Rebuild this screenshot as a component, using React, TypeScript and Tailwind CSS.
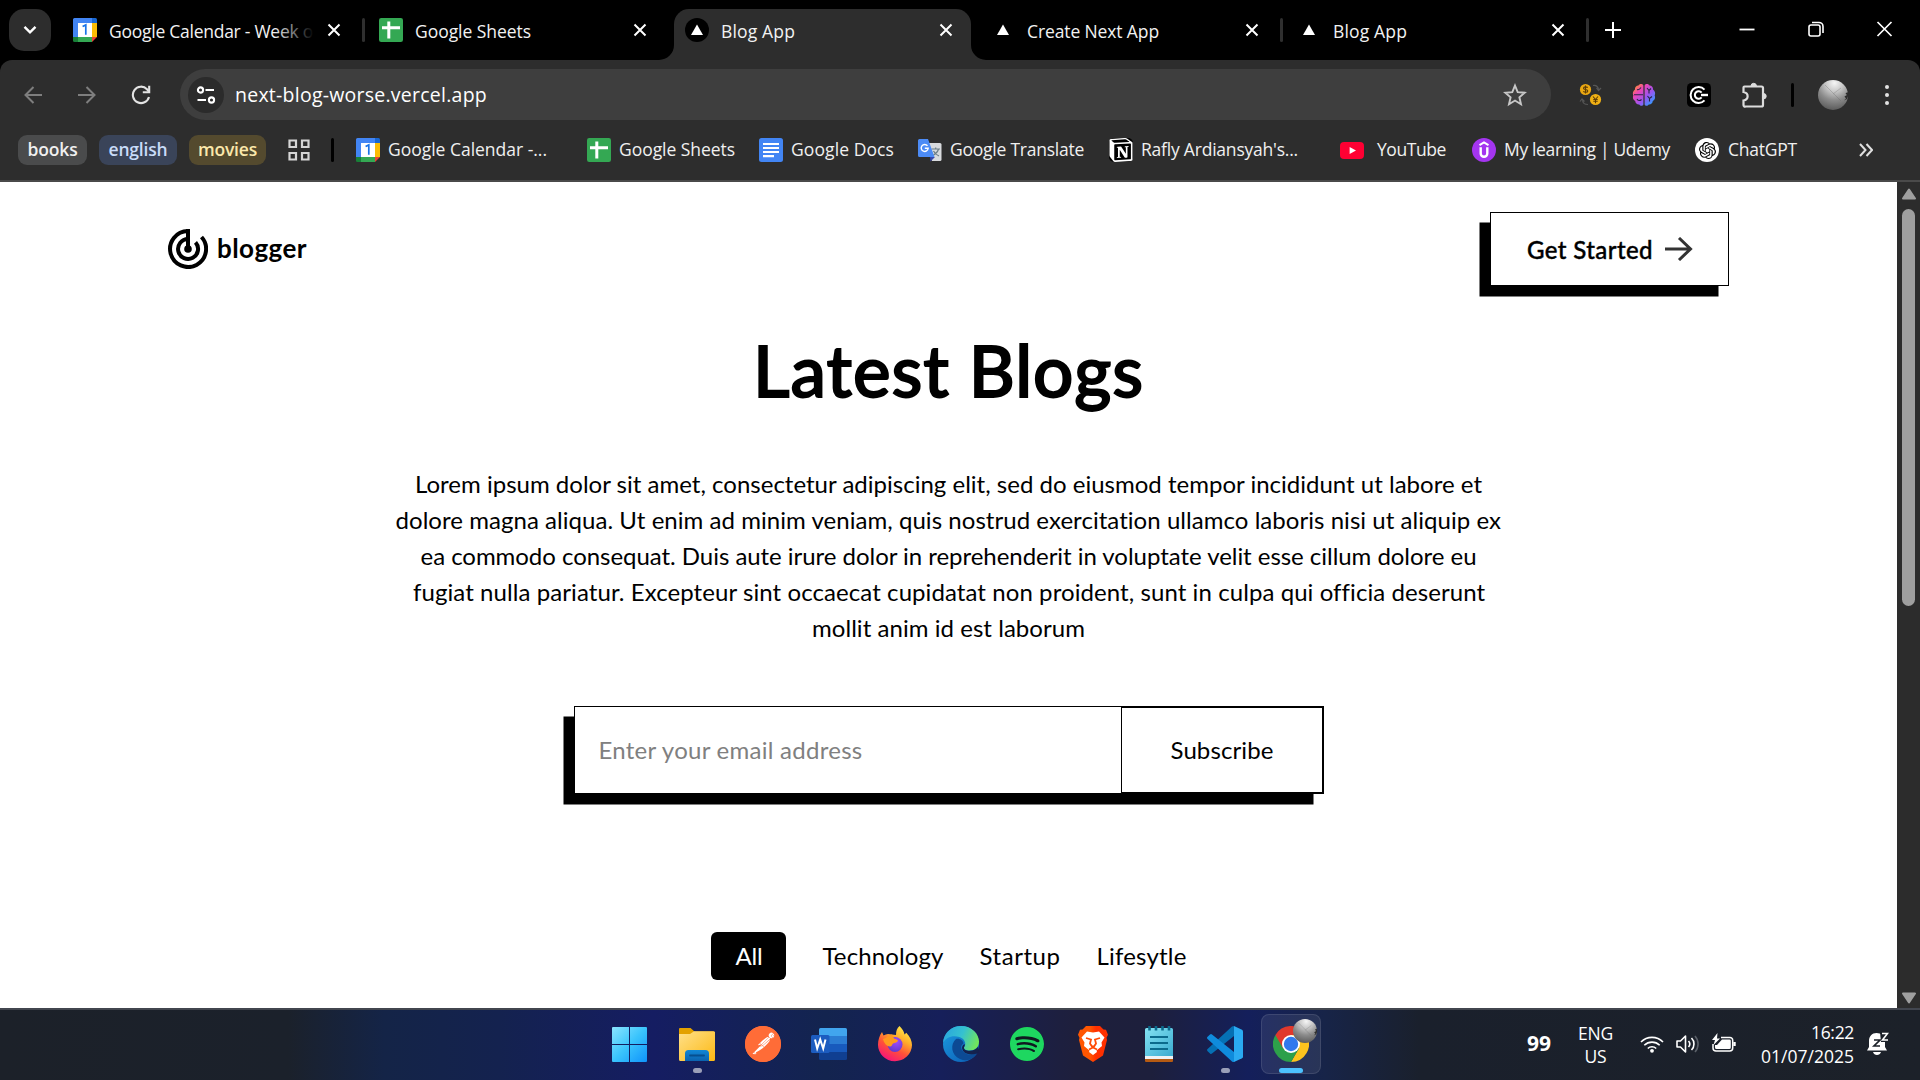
import { useLayoutEffect, useRef, useState, type ReactNode } from "react";
import { SiNotion, SiOpenai, SiSpotify, SiPostman } from "react-icons/si";

/* Single line of text tracked to an exact width. */
function Fit({ w, className = "", children }: { w: number; className?: string; children: string }) {
  const ref = useRef<HTMLSpanElement>(null);
  const [spacing, setSpacing] = useState(0);
  useLayoutEffect(() => {
    const el = ref.current;
    if (!el) return;
    el.style.letterSpacing = "0px";
    const natural = el.getBoundingClientRect().width;
    const next = (w - natural) / children.length;
    el.style.letterSpacing = `${next}px`;
    setSpacing(next);
  }, [w, children]);
  return (
    <span className={`block shrink-0 whitespace-nowrap ${className}`} style={{ width: w }}>
      <span ref={ref} style={{ letterSpacing: spacing }}>
        {children}
      </span>
    </span>
  );
}

const CalendarIcon = () => (
  <svg viewBox="0 0 24 24" className="size-6 shrink-0">
    <path d="M1.500 0H19v5H5v14H0V1.500A1.500 1.500 0 0 1 1.500 0z" fill="#4285f4" />
    <path d="M19 0h3.500A1.500 1.500 0 0 1 24 1.500V5h-5z" fill="#1967d2" />
    <path d="M19 5h5v14h-5z" fill="#fbbc04" />
    <path d="M5 19h14v5H5z" fill="#34a853" />
    <path d="M0 19h5v5H1.500A1.500 1.500 0 0 1 0 22.500z" fill="#188038" />
    <path d="M19 19h5l-5 5z" fill="#ea4335" />
    <path d="M5 5h14v14H5z" fill="#fff" />
    <path d="M9.600 8.600 12.800 7v9.800" fill="none" stroke="#1a73e8" strokeWidth="1.700" />
  </svg>
);

const SheetsIcon = () => (
  <svg viewBox="0 0 24 24" className="size-6 shrink-0">
    <rect width="24" height="24" rx="2.200" fill="#34a853" />
    <path d="M9.800 3.500V20.500M3 9.800H21" stroke="#fff" strokeWidth="3" />
  </svg>
);

const DocsIcon = () => (
  <svg viewBox="0 0 24 24" className="size-6 shrink-0">
    <rect width="24" height="24" rx="2.500" fill="#4285f4" />
    <path d="M4 6h16M4 10h16M4 14h16M4 18.200h11" stroke="#fff" strokeWidth="2.200" />
  </svg>
);

const TranslateIcon = () => (
  <svg viewBox="0 0 24 24" className="size-6 shrink-0">
    <path d="M9 5h13a1.500 1.500 0 0 1 1.500 1.500v15A1.500 1.500 0 0 1 22 23H14z" fill="#d8dadd" />
    <path d="M13.500 11h8.500M17.700 9.500V11M20.500 11c-.8 3-3 5-5.500 6.500M15.500 13c1 2 3 4 5.500 5" fill="none" stroke="#6b7c86" strokeWidth="1.200" />
    <path d="m12 19 5 0-4.500 4.500z" fill="#3949ab" />
    <path d="M1.500 1H10l6.500 18H1.500A1.500 1.500 0 0 1 0 17.500v-15A1.500 1.500 0 0 1 1.500 1z" fill="#4c8bf5" />
    <path d="M9.500 7.800A3.500 3.500 0 1 0 10.200 10.300H6.800" fill="none" stroke="#fff" strokeWidth="1.400" />
  </svg>
);

const YouTubeIcon = () => (
  <svg viewBox="0 0 24 24" className="size-6 shrink-0">
    <rect y="4" width="24" height="17" rx="4" fill="#ff0033" />
    <path d="m9.600 9 6.400 3.500-6.400 3.500z" fill="#fff" />
  </svg>
);

const UdemyIcon = () => (
  <svg viewBox="0 0 24 24" className="size-6 shrink-0">
    <circle cx="12" cy="12" r="12" fill="#a435f0" />
    <path d="m7.500 7.200 4.500-2.700 4.500 2.700" fill="none" stroke="#fff" strokeWidth="2" />
    <path d="M8.700 9.300v6.200a3.300 3.300 0 0 0 6.600 0V9.300" fill="none" stroke="#fff" strokeWidth="2.400" />
  </svg>
);

const NotionIcon = () => (
  <span className="flex size-6 shrink-0 items-center justify-center rounded-[5px] bg-black text-white">
    <SiNotion className="size-6" />
  </span>
);

const ChatGptIcon = () => (
  <span className="flex size-6 shrink-0 items-center justify-center rounded-full bg-white text-black">
    <SiOpenai className="size-[17px]" />
  </span>
);

const VercelIcon = () => (
  <svg viewBox="0 0 24 24" className="size-6 shrink-0">
    <circle cx="12" cy="12" r="12" fill="#000" />
    <path d="m12 6.500 6 10.500H6z" fill="#fff" />
  </svg>
);

const CloseX = () => (
  <svg viewBox="0 0 14 14" className="size-[14px] shrink-0" stroke="#fff" strokeWidth="2" fill="none">
    <path d="m1.500 1.500 11 11M12.500 1.500l-11 11" />
  </svg>
);

type TabProps = { icon: ReactNode; title: string; w: number; active?: boolean; fade?: boolean; divider?: boolean };

function Tab({ icon, title, w, active, fade, divider }: TabProps) {
  return (
    <div className="flex h-[60px] w-[306px] shrink-0">
      <div
        className={
          active
            ? "relative mt-[9px] flex h-[51px] w-[297px] items-center rounded-t-[15px] bg-[#2d2d2d] pb-[9px] pl-[11px]"
            : "relative mt-[9px] flex h-[51px] w-[297px] items-center pb-[9px] pl-[11px]"
        }
      >
        {active && (
          <>
            <svg viewBox="0 0 15 15" className="absolute bottom-0 -left-[15px] size-[15px]">
              <path d="M15 0v15H0A15 15 0 0 0 15 0z" fill="#2d2d2d" />
            </svg>
            <svg viewBox="0 0 15 15" className="absolute -right-[15px] bottom-0 size-[15px]">
              <path d="M0 0v15h15A15 15 0 0 1 0 0z" fill="#2d2d2d" />
            </svg>
          </>
        )}
        {icon}
        <div className="relative ml-3 flex w-[205px] pt-[2px] text-[17.500px] leading-6 text-[#f2f2f2]">
          <Fit w={w}>{title}</Fit>
          {fade && <div className="absolute inset-y-0 right-0 w-10 bg-linear-to-r from-transparent to-black" />}
        </div>
        <div className="ml-[13px]">
          <CloseX />
        </div>
      </div>
      {divider && <div className="mt-[18px] ml-[3px] h-6 w-[3px] rounded-full bg-[#2f2f2f]" />}
    </div>
  );
}

function TabStrip() {
  return (
    <div className="flex h-[60px] bg-black">
      <div className="mt-[9px] ml-[9px] flex h-[42px] w-[42px] shrink-0 items-center justify-center rounded-[15px] bg-[#2d2d2d]">
        <svg viewBox="0 0 14 10" className="h-[10px] w-[14px]" fill="none" stroke="#fff" strokeWidth="2.400">
          <path d="m1.500 1.800 5.500 5.500 5.500-5.500" />
        </svg>
      </div>
      <div className="ml-[11px] flex shrink-0">
        <Tab icon={<CalendarIcon />} title="Google Calendar - Week o" w={204} fade divider />
        <Tab icon={<SheetsIcon />} title="Google Sheets" w={116} />
        <Tab icon={<VercelIcon />} title="Blog App" w={74} active />
        <Tab icon={<VercelIcon />} title="Create Next App" w={132} divider />
        <Tab icon={<VercelIcon />} title="Blog App" w={74} divider />
      </div>
      <svg viewBox="0 0 16 16" className="mt-[22px] ml-[13px] size-4" stroke="#fff" strokeWidth="2">
        <path d="M8 0v16M0 8h16" />
      </svg>
      <div className="mt-[20px] ml-[117px] flex gap-[51px]">
        <svg viewBox="0 0 18 18" className="size-[18px]" stroke="#fff" strokeWidth="1.800">
          <path d="M1.500 9.500h15" />
        </svg>
        <svg viewBox="0 0 18 18" className="size-[18px]" fill="none" stroke="#fff" strokeWidth="1.600">
          <rect x="2" y="5" width="11" height="11" rx="2" />
          <path d="M5 2.500h7a4 4 0 0 1 4 4V13" />
        </svg>
        <svg viewBox="0 0 18 18" className="size-[18px]" fill="none" stroke="#fff" strokeWidth="1.700">
          <path d="m1.500 2 14 14M15.500 2l-14 14" />
        </svg>
      </div>
    </div>
  );
}

function Avatar({ className }: { className: string }) {
  return (
    <svg viewBox="0 0 30 30" className={className}>
      <defs>
        <radialGradient id="moon" cx="0.55" cy="0.1" r="0.95">
          <stop offset="0" stopColor="#f6f6f6" />
          <stop offset="0.3" stopColor="#c8c8c8" />
          <stop offset="0.6" stopColor="#8c8c8c" />
          <stop offset="1" stopColor="#555" />
        </radialGradient>
      </defs>
      <circle cx="15" cy="15" r="15" fill="url(#moon)" />
      <path d="m7 5 16 16M15 14l8-6" stroke="#666" strokeWidth=".6" opacity=".5" />
      <path d="m29.500 12-2 1.500 1.500 1.500-2.500 1.500 1.500 2-2 2 3-1.500 1.500-4z" fill="#2d2d2d" />
    </svg>
  );
}

function Toolbar() {
  return (
    <div className="bg-black">
      <div className="flex h-[69px] items-center rounded-t-[12px] bg-[#2d2d2d]">
        <svg viewBox="0 0 18 18" className="ml-6 size-[18px] shrink-0" fill="none" stroke="#7e7e7e" strokeWidth="2">
          <path d="M18 9H1.500M9.500 1 1.500 9l8 8" />
        </svg>
        <svg viewBox="0 0 18 18" className="ml-9 size-[18px] shrink-0" fill="none" stroke="#7e7e7e" strokeWidth="2">
          <path d="M0 9h16.500M8.500 1l8 8-8 8" />
        </svg>
        <svg viewBox="0 0 20 20" className="ml-[35px] size-5 shrink-0" fill="none" stroke="#e3e3e3" strokeWidth="2.100">
          <path d="M18 12a8.200 8.200 0 1 1-2-7.800L18 6.500" />
          <path d="M18.200 .8v6.400h-6.400" />
        </svg>
        <div className="ml-[29px] flex h-[51px] w-[1371px] shrink-0 items-center rounded-full bg-[#3e3e3e] pl-2">
          <div className="flex size-9 items-center justify-center rounded-full bg-[#2b2b2b]">
            <svg viewBox="0 0 20 20" className="size-5" fill="none" stroke="#fff" strokeWidth="2.100">
              <circle cx="4.500" cy="5" r="2.600" />
              <path d="M9.500 5H18M1.500 15H10" />
              <circle cx="15.500" cy="15" r="2.600" />
            </svg>
          </div>
          <Fit w={252} className="ml-[11px] text-[19.500px] text-white">next-blog-worse.vercel.app</Fit>
          <svg viewBox="0 0 24 24" className="ml-[1016px] size-6" fill="none" stroke="#c7c7c7" strokeWidth="1.900">
            <path d="m12 2.600 2.700 6.500 7 .6-5.300 4.600 1.600 6.900-6-3.700-6 3.700 1.600-6.900L2.300 9.700l7-.6z" />
          </svg>
        </div>
        <svg viewBox="0 0 24 24" className="ml-[28px] size-6 shrink-0" fill="none">
          <circle cx="6.500" cy="6.500" r="5.600" fill="#eba812" />
          <circle cx="16.500" cy="16.500" r="5.600" fill="#f0b014" />
          <path d="M8.700 4.600c-.6-.9-4.200-1.200-4.200.6s4.300.8 4.300 2.700-3.800 1.500-4.500.4M6.500 2.500v8" stroke="#5c3c06" strokeWidth="1.100" />
          <path d="m14 13.500 2.500 3 2.500-3M16.500 16.500v3.700M14.300 16.500h4.400M14.300 18.300h4.400" stroke="#5c3c06" strokeWidth="1.100" />
          <path d="M14 2.500c3-.5 5 1 5.500 4M17.500 5l2 2.500L22 5M9 21.500c-3 0-5-1-5.500-4M1 18.500l2-2.500 2.500 2.500" stroke="#565656" strokeWidth="1.200" />
        </svg>
        <svg viewBox="0 0 24 24" className="ml-[29px] size-6 shrink-0">
          <defs>
            <linearGradient id="brain" x1="0" y1="0" x2="1" y2="1">
              <stop offset="0.1" stopColor="#ff8a3c" />
              <stop offset="0.3" stopColor="#ee45b4" />
              <stop offset="0.6" stopColor="#9a55f2" />
              <stop offset="0.9" stopColor="#2f9dff" />
            </linearGradient>
          </defs>
          <path
            d="M11.400 2.500C10.500.6 7.500.5 6.500 2.600 4.300 2.600 2.600 4.500 3 6.600 1 8 .3 10.500 1.300 12.500.3 14.500 1.200 17 3.200 18c.2 2.200 2 3.600 4 3.400 1.200 1.900 3.600 1.700 4.200 0zM12.600 2.500c.9-1.900 3.900-2 4.900.1 2.200 0 3.900 1.900 3.500 4 2 1.400 2.700 3.900 1.700 5.900 1 2 .1 4.500-1.900 5.500-.2 2.200-2 3.600-4 3.400-1.200 1.900-3.600 1.700-4.200 0z"
            fill="url(#brain)"
          />
          <path d="M2 11.800h9M5 6.500c2 .8 3-.5 4-2M5 16c1 2 3 2 4.500.5M15 5l2 2.500L19 5.500M17 7.500v3M15.500 13l2 2.500 2.500-2M17.500 15.500v3" stroke="#2a2547" strokeWidth="1.100" fill="none" />
        </svg>
        <svg viewBox="0 0 24 24" className="ml-[31px] size-6 shrink-0" fill="none" stroke="#fff" strokeWidth="2">
          <rect width="24" height="24" rx="4.500" fill="#000" stroke="none" />
          <path d="M17.500 6.600a8 8 0 1 0 0 10.800" />
          <path d="M14.600 9.600a3.800 3.800 0 1 0 0 4.800" />
          <path d="M14 12h7" strokeWidth="2.400" />
        </svg>
        <svg viewBox="0 0 26 26" className="ml-[30px] size-[26px] shrink-0" fill="none" stroke="#dcdcdc" strokeWidth="2.200">
          <path d="M3.500 4.500h17a1.500 1.500 0 0 1 1.500 1.500v17a1.500 1.500 0 0 1-1.500 1.500h-16A1.500 1.500 0 0 1 2.500 23v-4.500c5.500-1 5.500-7.500 0-8.500V5.500a1 1 0 0 1 1-1z" />
          <path d="M10 4a2.700 2.700 0 0 1 5.400 0zM22.500 11.500a2.700 2.700 0 0 1 0 5.400z" fill="#dcdcdc" strokeWidth="1" />
        </svg>
        <div className="ml-[24px] h-6 w-[3px] shrink-0 rounded-full bg-black" />
        <Avatar className="ml-[24px] size-[30px] shrink-0" />
        <div className="ml-[37px] flex flex-col gap-1">
          <i className="block size-1 rounded-full bg-[#e3e3e3]" />
          <i className="block size-1 rounded-full bg-[#e3e3e3]" />
          <i className="block size-1 rounded-full bg-[#e3e3e3]" />
        </div>
      </div>
    </div>
  );
}

function Chip({ className, w, children }: { className: string; w: number; children: string }) {
  return (
    <div className={`flex h-[30px] shrink-0 items-center justify-center rounded-[9px] pb-px text-[17.500px] font-semibold ${className}`}>
      <Fit w={w}>{children}</Fit>
    </div>
  );
}

function Bookmark({ icon, w, gap = "ml-[8px]", margin, children }: { icon: ReactNode; w: number; gap?: string; margin: string; children: string }) {
  return (
    <div className={`flex shrink-0 items-center ${margin}`}>
      {icon}
      <Fit w={w} className={`pb-[2px] ${gap}`}>{children}</Fit>
    </div>
  );
}

function BookmarksBar() {
  return (
    <div className="flex h-[53px] items-center border-b-2 border-[#4a4a4a] bg-[#2d2d2d] pb-[9px] text-[17.500px] text-[#f0f0f0]">
      <Chip w={50} className="ml-[18px] w-[69px] bg-[#4a4b4c] text-[#f0f0f0]">books</Chip>
      <Chip w={59} className="ml-3 w-[78px] bg-[#3a4459] text-[#c9dcf8]">english</Chip>
      <Chip w={59} className="ml-3 w-[77px] bg-[#544a2e] text-[#fbe8ab]">movies</Chip>
      <svg viewBox="0 0 22 22" className="ml-[22px] size-[22px] shrink-0" fill="none" stroke="#d6d6d6" strokeWidth="2.200">
        <path d="M1.500 1.500h6.500v6.500H1.500zM14 1.500h6.500v6.500H14zM1.500 14h6.500v6.500H1.500zM14 14h6.500v6.500H14z" />
      </svg>
      <div className="ml-[21px] h-6 w-[3px] shrink-0 rounded-full bg-black" />
      <Bookmark icon={<CalendarIcon />} w={159} margin="ml-[22px]">Google Calendar -...</Bookmark>
      <Bookmark icon={<SheetsIcon />} w={116} margin="ml-[40px]">Google Sheets</Bookmark>
      <Bookmark icon={<DocsIcon />} w={103} margin="ml-[24px]">Google Docs</Bookmark>
      <Bookmark icon={<TranslateIcon />} w={134} margin="ml-[24px]">Google Translate</Bookmark>
      <Bookmark icon={<NotionIcon />} w={157} margin="ml-[25px]">Rafly Ardiansyah's...</Bookmark>
      <Bookmark icon={<YouTubeIcon />} w={69} gap="ml-[13px]" margin="ml-[42px]">YouTube</Bookmark>
      <Bookmark icon={<UdemyIcon />} w={166} margin="ml-[26px]">My learning | Udemy</Bookmark>
      <Bookmark icon={<ChatGptIcon />} w={69} gap="ml-[9px]" margin="ml-[25px]">ChatGPT</Bookmark>
      <svg viewBox="0 0 14 14" className="ml-[62px] size-[14px] shrink-0" fill="none" stroke="#e0e0e0" strokeWidth="2">
        <path d="m1 1 5.500 6L1 13M7.500 1 13 7l-5.500 6" />
      </svg>
    </div>
  );
}

function Page() {
  return (
    <div className="flex h-[826px]">
      <main className="w-[1897px] overflow-hidden bg-white text-black [font-family:Lato,sans-serif]">
        <header className="flex justify-between pt-[30px] pr-[168px] pl-[168px]">
          <div className="mt-[17px] flex h-10">
            <svg viewBox="0 0 40 40" className="size-10" fill="none" stroke="#000" strokeWidth="4">
              <path d="M20 2A18 18 0 1 0 33.500 8" />
              <path d="M20 10a10 10 0 1 0 7.500 3.300" />
              <path d="M20 0v20" />
              <circle cx="20" cy="20" r="3.800" fill="#000" stroke="none" />
            </svg>
            <Fit w={90} className="ml-[9px] text-[26px] leading-[39px] font-bold">blogger</Fit>
          </div>
          <button className="flex h-[74px] w-[239px] items-center border border-black bg-white pl-[36px] shadow-[-10.5px_10.5px_0_#000]">
            <Fit w={126} className="pt-px text-left text-[24px] font-medium [-webkit-text-stroke:0.4px_#000]">Get Started</Fit>
            <svg viewBox="0 0 28 24" className="ml-3 h-6 w-7" fill="none" stroke="#333" strokeWidth="3">
              <path d="M0 12h25.500M14 1l11.500 11L14 23" />
            </svg>
          </button>
        </header>
        <section className="flex flex-col items-center">
          <h1 className="mt-[30px]">
            <Fit w={391} className="text-[71px] leading-[108px] font-medium [-webkit-text-stroke:1.8px_#000]">Latest Blogs</Fit>
          </h1>
          <div className="mt-[42px] flex flex-col items-center text-[24px] leading-9">
            <Fit w={1067}>Lorem ipsum dolor sit amet, consectetur adipiscing elit, sed do eiusmod tempor incididunt ut labore et</Fit>
            <Fit w={1106}>dolore magna aliqua. Ut enim ad minim veniam, quis nostrud exercitation ullamco laboris nisi ut aliquip ex</Fit>
            <Fit w={1056}>ea commodo consequat. Duis aute irure dolor in reprehenderit in voluptate velit esse cillum dolore eu</Fit>
            <Fit w={1071}>fugiat nulla pariatur. Excepteur sint occaecat cupidatat non proident, sunt in culpa qui officia deserunt</Fit>
            <Fit w={273}>mollit anim id est laborum</Fit>
          </div>
          <div className="mt-[60px] flex h-[88px] w-[750px] border border-black bg-white text-[24px] shadow-[-10.5px_10.5px_0_#000]">
            <div className="flex w-[546px] items-center pl-6">
              <Fit w={264} className="text-[#808080]">Enter your email address</Fit>
            </div>
            <div className="flex flex-1 items-center justify-center border border-black pl-px">
              <Fit w={103}>Subscribe</Fit>
            </div>
          </div>
          <nav className="mt-[138px] flex h-12 items-center text-[24px]">
            <div className="flex h-12 w-[75px] items-center justify-center rounded-[6px] bg-black pl-[2px] text-white">
              <Fit w={27}>All</Fit>
            </div>
            <Fit w={121} className="ml-[37px]">Technology</Fit>
            <Fit w={81} className="ml-[36px]">Startup</Fit>
            <Fit w={90} className="ml-[36px]">Lifesytle</Fit>
          </nav>
        </section>
      </main>
      <aside className="flex w-[23px] flex-col items-center bg-[#2c2c2c] pt-[6px] pb-1">
        <svg viewBox="0 0 14 12" className="h-3 w-[14px]" fill="#9f9f9f" stroke="#9f9f9f" strokeLinejoin="round" strokeWidth="2">
          <path d="m7 1.500 6 9H1z" />
        </svg>
        <div className="mt-[9px] h-[397px] w-[13px] rounded-full bg-[#9f9f9f]" />
        <svg viewBox="0 0 14 12" className="mt-auto h-3 w-[14px]" fill="#9f9f9f" stroke="#9f9f9f" strokeLinejoin="round" strokeWidth="2">
          <path d="m7 10.500 6-9H1z" />
        </svg>
      </aside>
    </div>
  );
}

function Slot({ children, mark }: { children: ReactNode; mark?: boolean }) {
  return (
    <div className="relative flex h-[60px] w-[66px] items-center justify-center">
      {children}
      {mark && <div className="absolute bottom-[1px] left-[29px] h-[5px] w-[9px] rounded-full bg-[#9a9fb8]" />}
    </div>
  );
}

function Taskbar() {
  return (
    <footer className="flex h-[72px] border-t-2 border-[#42464f] bg-[linear-gradient(90deg,#1c2129_0%,#1b212b_15%,#142447_20%,#14224f_26%,#151d62_34%,#13244f_43%,#161f5a_49%,#1e1f3c_56%,#1d1f3c_60%,#141f5b_65%,#172448_69%,#1a202c_74%,#1c2129_100%)] pt-1">
      <div className="ml-[596px] flex">
        <Slot>
          <svg viewBox="0 0 35 35" className="size-[35px]">
            <defs>
              <linearGradient id="win" x1="0" y1="0" x2="35" y2="35" gradientUnits="userSpaceOnUse">
                <stop offset="0" stopColor="#8be4ff" />
                <stop offset="0.5" stopColor="#3ac4fc" />
                <stop offset="1" stopColor="#0f93fb" />
              </linearGradient>
            </defs>
            <path d="M1 0h16v17H0V1a1 1 0 0 1 1-1zM18 0h16a1 1 0 0 1 1 1v16H18zM0 18h17v17H1a1 1 0 0 1-1-1zM18 18h17v16a1 1 0 0 1-1 1H18z" fill="url(#win)" />
          </svg>
        </Slot>
        <div className="ml-[2px] flex">
          <Slot mark>
            <svg viewBox="0 0 36 33" className="h-[33px] w-9">
              <defs>
                <linearGradient id="folder" x1="0" y1="0" x2="1" y2="1">
                  <stop offset="0" stopColor="#ffe08a" />
                  <stop offset="1" stopColor="#fcb913" />
                </linearGradient>
                <linearGradient id="tray" x1="0" y1="0" x2="0" y2="1">
                  <stop offset="0" stopColor="#1187d6" />
                  <stop offset="1" stopColor="#0b63b0" />
                </linearGradient>
              </defs>
              <path d="M1 0h10.500l4 3.500H34A2 2 0 0 1 36 5v6H0V1a1 1 0 0 1 1-1z" fill="#e3a100" />
              <path d="M0 6h11l4-2.700h19.500A1.500 1.500 0 0 1 36 5v26.500A1.500 1.500 0 0 1 34.500 33h-33A1.500 1.500 0 0 1 0 31.500z" fill="url(#folder)" />
              <path d="M6 33v-7.500A3.500 3.500 0 0 1 9.500 22h17a3.500 3.500 0 0 1 3.500 3.500V33z" fill="url(#tray)" />
              <path d="M11 27.500h14" stroke="#064f8f" strokeWidth="1.800" strokeLinecap="round" />
            </svg>
          </Slot>
          <Slot>
            <span className="flex size-9 rounded-full bg-[radial-gradient(circle,#fff_60%,#ff6c37_61%)]">
              <SiPostman className="size-9 text-[#ff6c37]" />
            </span>
          </Slot>
          <Slot>
            <svg viewBox="0 0 36 32" className="h-8 w-9">
              <path d="M8 1.500A1.500 1.500 0 0 1 9.500 0h25A1.500 1.500 0 0 1 36 1.500V8H8z" fill="#41a5ee" />
              <path d="M8 8h28v8H8z" fill="#2b7cd3" />
              <path d="M8 16h28v8H8z" fill="#185abd" />
              <path d="M8 24h28v6.500a1.500 1.500 0 0 1-1.500 1.500h-25A1.500 1.500 0 0 1 8 30.500z" fill="#103f91" />
              <rect y="7" width="18.500" height="18" rx="1.500" fill="#1c5cc0" />
              <path d="m4 11.500 2.200 9 3-9 3 9 2.300-9" fill="none" stroke="#fff" strokeWidth="2" />
            </svg>
          </Slot>
          <Slot>
            <svg viewBox="0 0 34 36" className="h-9 w-[34px]">
              <defs>
                <linearGradient id="fox" x1="0.85" y1="0" x2="0.3" y2="1">
                  <stop offset="0" stopColor="#fff44f" />
                  <stop offset="0.35" stopColor="#ffb02a" />
                  <stop offset="0.65" stopColor="#ff5138" />
                  <stop offset="1" stopColor="#f5127c" />
                </linearGradient>
                <radialGradient id="globe" cx="0.6" cy="0.3" r="0.8">
                  <stop offset="0" stopColor="#a04bff" />
                  <stop offset="1" stopColor="#5a37c8" />
                </radialGradient>
              </defs>
              <path d="M21.500 0c3 3 4.500 5.500 5 8.500l1.800-1.800C32 10.500 34 15 34 19A17 16.500 0 0 1 0 18.500C0 14 1.500 9.500 4 6l1.500 3.500C7 8.500 8.500 8 10 8c3 0 5 1 8 1 0-4 1-7 3.500-9z" fill="url(#fox)" />
              <circle cx="17" cy="18.500" r="7.500" fill="url(#globe)" />
              <path d="M5 13c4-1 6-4 9-4.500l2 4c2 1 3.500 1 4 2-.5 2-3 2.500-5 3-1.500 2-1 3-3 3-3 0-6-3-7-7.500z" fill="#ff9a1f" />
            </svg>
          </Slot>
          <Slot>
            <svg viewBox="0 0 36 36" className="size-9">
              <defs>
                <linearGradient id="edgeTop" x1="0" y1="0.3" x2="1" y2="0.6">
                  <stop offset="0" stopColor="#2aa6dc" />
                  <stop offset="0.5" stopColor="#35c1d0" />
                  <stop offset="1" stopColor="#73e757" />
                </linearGradient>
                <linearGradient id="edgeLow" x1="0" y1="0" x2="1" y2="1">
                  <stop offset="0" stopColor="#1b9de2" />
                  <stop offset="1" stopColor="#0b58b0" />
                </linearGradient>
              </defs>
              <circle cx="18" cy="18" r="18" fill="url(#edgeLow)" />
              <path d="M0 17C1 6 9 0 18 0c11 0 18 8 18 15.500 0 6-4 9-9.500 9-4 0-6-1.500-5.500-3 2.500-3 1.500-8.500-4.500-10.500C9.500 9 3 11 0 17z" fill="url(#edgeTop)" />
              <path d="M13 13c-6 5-5 16 4 20 7 3 14 0 17.500-6-5 3-13 2-15.500-3-1.500-3-1-5 1.500-6.500 0-3-4-5.500-7.500-4.500z" fill="#0c4a94" />
              <path d="M21 21c-.5 3 3 4 6 3.800 3.200-.2 6-1.300 8-4L36 25l-2 2.500c-6 2-14 1-15-5.500.2-2 1-3.300 2.500-4 .6 1 .3 2-.5 3z" fill="#14224e" />
            </svg>
          </Slot>
          <Slot>
            <span className="flex size-[34px] items-center justify-center rounded-full bg-[#101820]">
              <SiSpotify className="size-[34px] text-[#1ed760]" />
            </span>
          </Slot>
          <Slot>
            <svg viewBox="0 0 30 36" className="h-9 w-[30px]">
              <defs>
                <linearGradient id="lion" x1="0" y1="0" x2="1" y2="0">
                  <stop offset="0.4" stopColor="#ff5601" />
                  <stop offset="0.6" stopColor="#ff3000" />
                </linearGradient>
              </defs>
              <path d="M8 0h14l3.500 3.500 2.500.2 2 5-1.500 3L29 14l-4 15.500L15 36 5 29.500 1 14l.5-2.300L0 8.700l2-5 2.500-.2z" fill="url(#lion)" />
              <path d="M9 5.500 15 6.500l6-1 5.500 6-3 5 .5 3.500-5.500 4.500.5 1.500-4 3-4-3 .5-1.500L6 20l.5-3.500-3-5z" fill="#fff" />
              <path d="m8 12 5 1.500-1 4 2 3h2l2-3-1-4 5-1.500M11 23.500l4-2 4 2M15 20v2" fill="none" stroke="#ff4a05" strokeWidth="1.800" />
            </svg>
          </Slot>
          <Slot>
            <svg viewBox="0 0 28 36" className="h-9 w-7">
              <path d="M0 31h28v4a1 1 0 0 1-1 1H1a1 1 0 0 1-1-1z" fill="#b55a12" />
              <path d="M0 29h28v4H0z" fill="#eef2f4" />
              <defs>
                <linearGradient id="note" x1="0" y1="0" x2="1" y2="1">
                  <stop offset="0" stopColor="#84e2f2" />
                  <stop offset="1" stopColor="#3aabd0" />
                </linearGradient>
              </defs>
              <path d="M0 3.500A1.500 1.500 0 0 1 1.500 2h25A1.500 1.500 0 0 1 28 3.500V30H0z" fill="url(#note)" />
              <path d="M5 11h18M5 17h18M5 23h18" stroke="#0b6a8c" strokeWidth="1.800" />
              <path d="M4.500 0v4.500M11 0v4.500M17.500 0v4.500M24 0v4.500" stroke="#0b6a8c" strokeWidth="2.600" />
            </svg>
          </Slot>
          <Slot mark>
            <svg viewBox="0 0 36 36" className="size-9">
              <path d="M27 0v10L5 27.500a1.500 1.500 0 0 1-2-.1L.6 25.200a1.500 1.500 0 0 1 0-2.200L25 .6z" fill="#0570b4" />
              <path d="M.6 13a1.500 1.500 0 0 1 0-2.200L3 8.600a1.500 1.500 0 0 1 2-.1L27 26v10c-1 0-1.500-.2-2-.6z" fill="#0f8bdc" />
              <path d="m27 0 8 3.700c.6.300 1 .9 1 1.600v25.400c0 .7-.4 1.300-1 1.600L27 36z" fill="#2aaaf2" />
            </svg>
          </Slot>
          <div className="relative ml-[3px] flex size-[60px] items-center justify-center self-start rounded-lg border border-white/10 bg-white/8">
            <svg viewBox="0 0 36 36" className="size-9">
              <path d="M18 18 18 36A18 18 0 0 1 2.400 9z" fill="#2da04a" />
              <path d="M18 9h15.600A18 18 0 0 1 18 36l7.800-13.500z" fill="#fcc31e" />
              <path d="M18 36 25.800 22.500 10.200 22.500z" fill="#2da04a" />
              <path d="M2.400 9A18 18 0 0 1 33.600 9H18l-7.800 13.500z" fill="#e0382c" />
              <circle cx="18" cy="18" r="9" fill="#fff" />
              <circle cx="18" cy="18" r="7.200" fill="#3079ee" />
            </svg>
            <Avatar className="absolute top-1 right-[3px] size-6" />
            <div className="absolute bottom-0 left-[17px] h-[5px] w-6 rounded-full bg-[#4cc2ff]" />
          </div>
        </div>
      </div>
      <div className="ml-[206px] flex h-[60px] items-center text-[17.500px] text-white">
        <Fit w={24} className="text-[21px] font-bold">99</Fit>
        <div className="ml-[27px] flex flex-col items-center pt-px leading-[23px]">
          <Fit w={35}>ENG</Fit>
          <Fit w={22}>US</Fit>
        </div>
        <svg viewBox="0 0 24 18" className="ml-[27px] h-[18px] w-6" fill="none" stroke="#fff" strokeWidth="1.600">
          <path d="M1 7a15.500 15.500 0 0 1 22 0M4.300 10.300a11 11 0 0 1 15.400 0M7.800 13.500a6 6 0 0 1 8.400 0" />
          <circle cx="12" cy="15.800" r="1.900" fill="#fff" stroke="none" />
        </svg>
        <svg viewBox="0 0 24 20" className="ml-3 h-5 w-6" fill="none" stroke="#fff" strokeWidth="1.600">
          <path d="M1 7h3.500L9.500 2v16l-5-5H1z" strokeLinejoin="round" />
          <path d="M12.500 7a4.500 4.500 0 0 1 0 6M15.500 4a8.500 8.500 0 0 1 0 12" />
          <path d="M19 2a12 12 0 0 1 0 16" stroke="#5a5f68" />
        </svg>
        <svg viewBox="0 0 24 20" className="mb-[2px] ml-3 h-5 w-6" fill="none" stroke="#fff" strokeWidth="1.500">
          <path d="M9 4.500h9a2.700 2.700 0 0 1 2.700 2.700V15a3 3 0 0 1-3 3H4a3 3 0 0 1-3-3v-4" />
          <path d="M10 6.500h7.500a1.300 1.300 0 0 1 1.300 1.300v6.700a1.500 1.500 0 0 1-1.500 1.500H4.500A1.500 1.500 0 0 1 3 14.500V12h2z" fill="#fff" stroke="none" />
          <path d="M22.500 9v4" strokeWidth="2.400" />
          <path d="M5.500 0 0 7h3l-1.500 5L8 5.500H5z" fill="#fff" stroke="none" />
        </svg>
        <div className="ml-[25px] flex flex-col items-end leading-6">
          <Fit w={43}>16:22</Fit>
          <Fit w={93}>01/07/2025</Fit>
        </div>
        <svg viewBox="0 0 22 24" className="ml-[13px] h-6 w-[22px]" fill="none">
          <path d="M9.500 1C5 1 2 4.500 2 9v6l-2 3.500h20L18 15V9c0-4.500-4-8-8.500-8zM6 20h8c-1 4-7 4-8 0z" fill="#fff" />
          <path d="M7 8h6l-6 6h6" stroke="#1c2129" strokeWidth="1.700" />
          <path d="M13 0h9v10h-8z" fill="#1c2129" />
          <path d="M15 1.500h5.500L15.500 8H21" stroke="#fff" strokeWidth="1.600" />
        </svg>
      </div>
    </footer>
  );
}

export default function App() {
  return (
    <div className="flex h-[1080px] w-[1920px] flex-col overflow-hidden bg-black [font-family:'Open_Sans','Noto_Sans',sans-serif]">
      <TabStrip />
      <Toolbar />
      <BookmarksBar />
      <Page />
      <Taskbar />
    </div>
  );
}
